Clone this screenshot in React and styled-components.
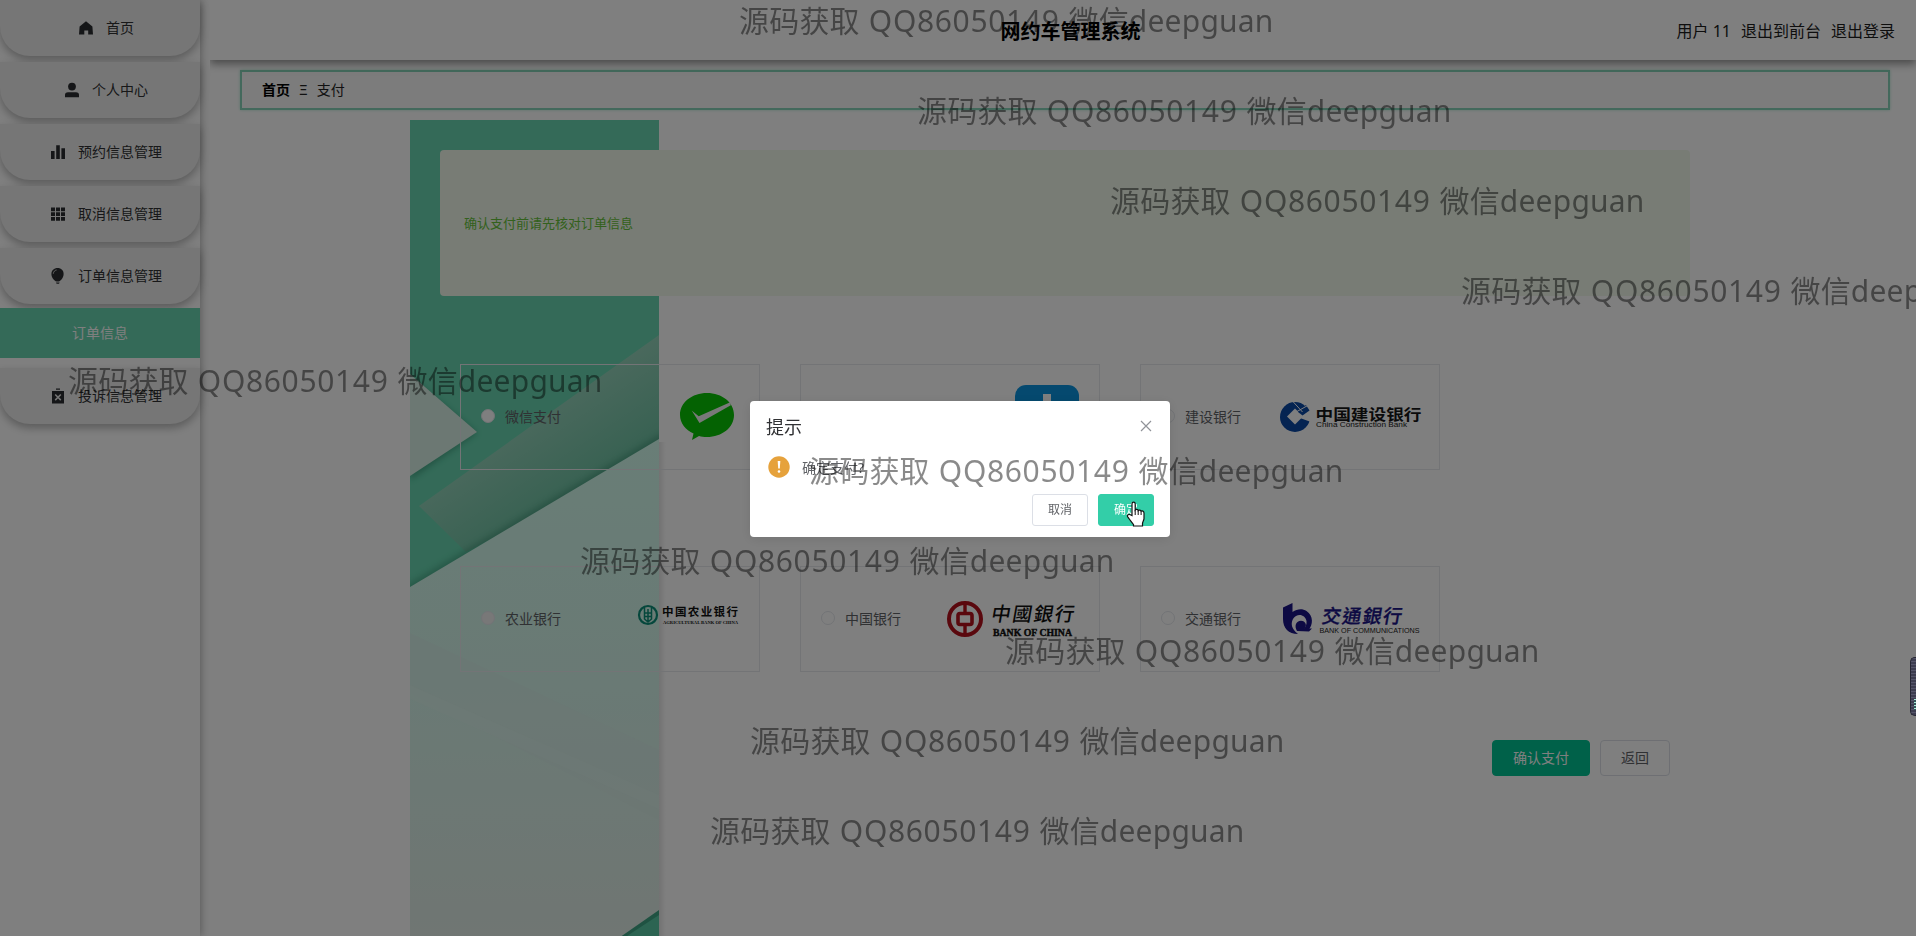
import React from 'react';
import styled, { createGlobalStyle } from 'styled-components';

const GlobalStyle = createGlobalStyle`
  * { box-sizing: border-box; }
  html, body { margin: 0; padding: 0; overflow: hidden; }
  body {
    width: 1916px;
    height: 936px;
    background: #fff;
    font-family: "Noto Sans", "Noto Sans CJK SC", sans-serif;
    font-size: 14px;
    color: #303133;
  }
`;

const Page = styled.div`
  display: flex;
  gap: 10px;
  width: 1916px;
  height: 936px;
  background: #fff;
  overflow: hidden;
`;

/* ---------- sidebar ---------- */

const Sidebar = styled.nav`
  width: 200px;
  height: 936px;
  flex: none;
  display: flex;
  flex-direction: column;
  background: #fff;
  box-shadow: 1px 0 8px rgba(64, 64, 64, 0.4);
`;

const MenuItem = styled.div`
  height: 56px;
  flex: none;
  margin-bottom: ${(p) => (p.$open ? 4 : 6)}px;
  display: flex;
  align-items: center;
  justify-content: center;
  border-radius: 0 0 30px 30px;
  background: #ececec;
  box-shadow: 0 4px 8px rgba(64, 64, 64, 0.38);
  line-height: 20px;
  color: #303133;

  svg {
    width: 14px;
    height: 14px;
    margin: 0 13px;
    flex: none;
    fill: #2b2d30;
    overflow: visible;
  }
`;

const SubMenuItem = styled.div`
  height: 50px;
  flex: none;
  margin-bottom: 10px;
  padding-bottom: 2px;
  display: flex;
  align-items: center;
  justify-content: center;
  background: #68d5b0;
  color: #fff;
`;

/* ---------- header and breadcrumb ---------- */

const Main = styled.main`
  width: 1706px;
  display: flex;
  flex-direction: column;
`;

const Header = styled.header`
  height: 60px;
  flex: none;
  padding: 4px 21px 0 36px;
  display: grid;
  grid-template-columns: 1fr auto 1fr;
  align-items: center;
  background: #fff;
  box-shadow: 0 4px 8px rgba(48, 48, 48, 0.5);
  clip-path: inset(0 0 -20px 0);
`;

const Title = styled.h1`
  grid-column: 2;
  margin: 0;
  font-size: 20px;
  line-height: 28px;
  font-weight: 700;
  color: #000;
`;

const HeaderLinks = styled.div`
  display: flex;
  justify-content: flex-end;
  gap: 10px;
  padding-bottom: 3px;
  font-size: 16px;
  line-height: 24px;
  color: #1c1c1c;
`;

const Breadcrumb = styled.div`
  height: 40px;
  flex: none;
  margin: 10px 26px 10px 30px;
  padding: 0 20px 2px;
  display: flex;
  align-items: center;
  gap: 9px;
  border: 2px solid #86d3b8;
  background: #f8f8f8;
  box-shadow: 0 0 3px #b4e6d6;
  color: #222;

  b { color: #000; font-weight: 700; }
`;

/* ---------- payment form ---------- */

const Content = styled.section`
  position: relative;
  height: 816px;
  width: 1310px;
  margin-left: 200px;
  padding: 30px;
  isolation: isolate;
`;

const Backdrop = styled.svg`
  position: absolute;
  z-index: -1;
  left: 0;
  top: 0;
  width: 249px;
  height: 816px;
  overflow: visible;
`;

const Notice = styled.div`
  height: 146px;
  padding: 0 24px 1px;
  display: flex;
  align-items: center;
  border-radius: 4px;
  background: #f0f9eb;
  color: #67c23a;
  font-size: 13px;
`;

const Options = styled.div`
  padding: 68px 20px 0;
  display: grid;
  grid-template-columns: repeat(3, 300px);
  column-gap: 40px;
  row-gap: 96px;
`;

const Option = styled.label`
  height: 106px;
  padding: 0 9px 0 20px;
  display: flex;
  align-items: center;
  justify-content: space-between;
  border: 1px solid #e6e8ec;
  color: #606266;
`;

const Choice = styled.span`
  display: flex;
  align-items: center;
  gap: 10px;
  padding-bottom: 3px;
`;

const Radio = styled.span`
  width: 14px;
  height: 14px;
  border-radius: 50%;
  border: 1px solid #e4e7ec;
  background: ${(p) => (p.$dim ? '#f0f0f0' : '#fff')};
`;

const Logo = styled.svg`
  width: 160px;
  height: 60px;
  overflow: visible;
`;

const Actions = styled.div`
  margin-top: 68px;
  padding-right: 20px;
  display: flex;
  justify-content: flex-end;
  gap: 10px;
`;

const Button = styled.button`
  height: ${(p) => (p.$small ? 32 : 36)}px;
  width: ${(p) => p.$width}px;
  padding: 0;
  border-radius: ${(p) => (p.$small ? 3 : 4)}px;
  border: 1px solid ${(p) => p.$fill || '#dcdfe6'};
  background: ${(p) => p.$fill || '#fff'};
  color: ${(p) => (p.$fill ? '#fff' : '#606266')};
  font: ${(p) => (p.$small ? '12px' : '14px')} "Noto Sans", "Noto Sans CJK SC", sans-serif;
  line-height: 1;
`;

const GhostButton = styled(Button)`
  background: transparent;
`;

/* ---------- dialog ---------- */

const Overlay = styled.div`
  position: fixed;
  inset: 0;
  padding: 2px 0 0 4px;
  display: flex;
  align-items: center;
  justify-content: center;
  background: rgba(0, 0, 0, 0.5);
`;

const Dialog = styled.div`
  width: 420px;
  height: 136px;
  padding: 11px 16px;
  display: flex;
  flex-direction: column;
  border-radius: 4px;
  background: #fff;
  box-shadow: 0 2px 12px rgba(0, 0, 0, 0.1);
`;

const DialogHead = styled.div`
  height: 28px;
  display: flex;
  align-items: center;
  justify-content: space-between;
  font-size: 18px;
  color: #303133;

  svg { width: 16px; height: 16px; }
`;

const DialogBody = styled.div`
  height: 24px;
  margin: 15px 0;
  padding-left: 2px;
  display: flex;
  align-items: center;
  gap: 12px;
  color: #606266;

  svg { width: 22px; height: 22px; }
`;

const DialogFoot = styled.div`
  display: flex;
  justify-content: flex-end;
  gap: 10px;
`;

/* ---------- floating layers ---------- */

const Watermark = styled.div`
  position: absolute;
  left: ${(p) => p.$x}px;
  top: ${(p) => p.$y}px;
  display: flex;
  gap: 9px;
  height: 40px;
  line-height: 40px;
  white-space: nowrap;
  font-size: 30px;
  letter-spacing: 0.2px;
  color: rgba(0, 0, 0, 0.46);
`;

const WatermarkLayer = styled.div`
  position: fixed;
  inset: 0;
  overflow: hidden;
  pointer-events: none;
`;

const WatermarkNumber = styled.span`
  letter-spacing: 0.65px;
`;

const Cursor = styled.svg`
  position: fixed;
  left: 1126px;
  top: 501px;
  width: 20px;
  height: 26px;
`;

const EdgeWidget = styled.div`
  position: fixed;
  right: 0;
  top: 657px;
  width: 6px;
  height: 59px;
  padding: 41px 0 0 3px;
  border: 1px solid #252533;
  border-right: 0;
  border-radius: 5px 0 0 5px;
  background: repeating-linear-gradient(#55556a 0 1px, #3d3d50 1px 3px);

  &::after {
    content: "";
    display: block;
    height: 11px;
    background: repeating-linear-gradient(#a5ead6 0 1px, #35555a 1px 3px);
  }
`;

/* ---------- icons ---------- */

const icons = {
  home: (
    <svg viewBox="0 0 14 14"><path d="M7 .3 13.4 5.6 14 13.6H9.2V9.4H5.3v4.2H0L.6 5.6z" /></svg>
  ),
  user: (
    <svg viewBox="0 0 14 14"><circle cx="7" cy="3.6" r="3.9" /><path d="M0 14.2V11.8Q0 9.2 3 9.2h8q3 0 3 2.6v2.4z" /></svg>
  ),
  data: (
    <svg viewBox="0 0 14 14"><path d="M0 6h3.6v8H0zM5.2 0.2h3.6V14H5.2zM10.4 3.2H14V14h-3.6z" /></svg>
  ),
  grid: (
    <svg viewBox="0 0 14 14">
      <path d="M0 .5h4v3.7H0zM5 .5h4v3.7H5zM10 .5h4v3.7h-4zM0 5.2h4v3.7H0zM5 5.2h4v3.7H5zM10 5.2h4v3.7h-4zM0 10h4v3.7H0zM5 10h4v3.7H5zM10 10h4v3.7h-4z" />
    </svg>
  ),
  balloon: (
    <svg viewBox="0 0 14 14">
      <path d="M6.6-1C10.200-1 12.600 1.400 12.600 5c0 3.500-2.600 6.800-5 7.600h-2C3 11.800.4 8.500.4 5c0-3.600 2.600-6 6.200-6z" />
      <path d="M5 13.400h3.600l-.6 1.400H5.600z" />
      <path d="M2.300 4.700C2.500 2.700 3.800 1.300 5.600 1" fill="none" stroke="#c8c8c8" strokeWidth="1" />
    </svg>
  ),
  clipboard: (
    <svg viewBox="0 0 14 14">
      <path d="M5 -.6h4v1.400H5zM1 2h12v12.400H1z" />
      <path d="M4.200 5.500l5.600 5.600M9.800 5.500l-5.600 5.600" stroke="#ececec" strokeWidth="1.500" />
    </svg>
  ),
};

const WechatLogo = () => (
  <Logo viewBox="0 0 160 60">
    <path d="M117 6c15 0 27 9.500 27 22s-12 22-27 22c-3.500 0-5.500-.3-8-1l-7 4 1.500-6.500C95.500 43 90 36 90 28 90 15.500 102 6 117 6z" fill="#08c405" />
    <path d="M101.700 23.500l7 5.800 31.500-14 .6 3-31.300 17.800z" fill="#f2f2f2" />
  </Logo>
);

const AlipayLogo = () => (
  <Logo viewBox="0 0 160 60">
    <rect x="85" y="-2" width="64" height="64" rx="11" fill="#0a93de" />
    <path d="M113 7h8v9h18v5h-18v6h14c-2 8-5 13-9 17 6 3 13 4 20 6l-2 7c-9-2-17-5-24-8-15 13-30 5-27-5 3-9 16-9 25-3 3-3 5-6 6-9H98v-5h15v-6H96v-5h17z" fill="#fff" />
  </Logo>
);

const CcbLogo = () => (
  <Logo viewBox="0 0 160 60">
    <circle cx="25" cy="30" r="15" fill="#0a48a4" />
    <path d="M25 21.500 33 29.500 25 37.500 17 29.500z" fill="#fff" />
    <path d="M29 26.500 41 22V35L30 31z" fill="#fff" />
    <path d="M27.500 24.500 36 18l3.500 5.500-7 5z" fill="#0a48a4" />
    <path d="M22 13.500 32.500 25M27 24.500 39.500 17.500" stroke="#fff" strokeWidth="1" />
    <text x="45.500" y="33" fontSize="15" fontWeight="700" textLength="106" lengthAdjust="spacingAndGlyphs" fill="#161616">中国建设银行</text>
    <text x="46" y="40" fontSize="8" textLength="91" lengthAdjust="spacingAndGlyphs" fontFamily="Liberation Sans" fill="#161616">China Construction Bank</text>
  </Logo>
);

const AbcLogo = () => (
  <Logo viewBox="0 0 160 60">
    <circle cx="58" cy="26" r="9" fill="none" stroke="#0b8f78" strokeWidth="2.200" />
    <path d="M58 20v15M54.500 18v6h7v-6M54 27.500h8M54.500 23v7l3.500 3 3.500-3v-7" fill="none" stroke="#0b8f78" strokeWidth="1.500" />
    <text x="72" y="27" fontSize="11.500" fontWeight="700" textLength="76" fill="#111">中国农业银行</text>
    <text x="73" y="35.300" fontSize="5" fontWeight="700" textLength="75" lengthAdjust="spacingAndGlyphs" fontFamily="Liberation Serif" fill="#111">AGRICULTURAL BANK OF CHINA</text>
  </Logo>
);

const BocLogo = () => (
  <Logo viewBox="0 0 160 60">
    <g fill="none" stroke="#b4101c">
      <circle cx="35" cy="30" r="16" strokeWidth="4" />
      <rect x="28" y="24.500" width="14" height="11" rx="2" strokeWidth="3.600" />
      <path d="M35 13v11M35 36v11" strokeWidth="3.400" />
    </g>
    <g transform="skewX(-10)">
      <text x="66" y="32" fontSize="19.500" fontWeight="500" textLength="83" fontFamily="Noto Sans CJK TC" fill="#111">中國銀行</text>
    </g>
    <text x="63" y="47" fontSize="10" fontWeight="700" textLength="79" lengthAdjust="spacingAndGlyphs" fontFamily="Liberation Serif" fill="#111" stroke="#111" strokeWidth=".4">BANK OF CHINA</text>
  </Logo>
);

const BocomLogo = () => (
  <Logo viewBox="0 0 160 60">
    <path d="M13 18.500 22.500 14v9c5-3.500 10-3.500 14-1 7 4.500 7 14 1.500 19.500H32c3.500-2.500 5-6 4.500-9.500-1-5.500-6.500-7.500-10.500-5-4 2.300-5.500 8-3 12.500 1.200 2.300 3 4 5 5.500-9.500 0-15-6-15-15z" fill="#1a1486" />
    <path d="M27 42c-3-5-1-10 4-10.200 4.500 0 6.500 4.700 3.500 7.700H42l-3 3z" fill="#1a1486" />
    <g transform="skewX(-10)">
      <text x="57" y="34" fontSize="19" fontWeight="500" textLength="80" fontFamily="Noto Sans CJK TC" fill="#1a1486" stroke="#1a1486" strokeWidth=".3">交通銀行</text>
    </g>
    <text x="49.500" y="44" fontSize="7.500" textLength="100" lengthAdjust="spacingAndGlyphs" fontFamily="Liberation Sans" fill="#222">BANK OF COMMUNICATIONS</text>
  </Logo>
);

const PanelArt = () => (
  <Backdrop viewBox="0 0 249 816">
    <defs>
      <linearGradient id="band" gradientUnits="userSpaceOnUse" x1="90" y1="320" x2="140" y2="395">
        <stop offset="0" stopColor="#94d2ba" />
        <stop offset="1" stopColor="#6ec2a3" />
      </linearGradient>
      <linearGradient id="sheet" x1="0" y1="0" x2="0" y2="1">
        <stop offset="0" stopColor="#d2fcee" />
        <stop offset=".5" stopColor="#d4f4ea" />
        <stop offset="1" stopColor="#e0ece6" />
      </linearGradient>
      <linearGradient id="edge" x1="0" y1="0" x2="1" y2="0">
        <stop offset="0" stopColor="#000" stopOpacity=".1" />
        <stop offset="1" stopColor="#000" stopOpacity="0" />
      </linearGradient>
      <filter id="soft" x="-20%" y="-20%" width="140%" height="140%"><feGaussianBlur stdDeviation="3" /></filter>
      <clipPath id="panel"><rect width="249" height="816" /></clipPath>
    </defs>
    <rect x="249" y="322" width="7" height="494" fill="url(#edge)" />
    <g clipPath="url(#panel)">
      <rect width="249" height="816" fill="#68d5b0" />
      <path d="M9 386 249 215V330L56 432z" fill="url(#band)" />
      <path d="M0 256 67 313 0 360z" fill="#1c6e52" opacity=".45" filter="url(#soft)" />
      <path d="M0 254 67 312 0 356z" fill="#d8f0e6" />
      <path d="M-5 466 254 312V820H-5z" fill="#1c6e52" opacity=".35" filter="url(#soft)" />
      <path d="M0 467 249 319V816H0z" fill="url(#sheet)" />
      <path d="M0 513 249 630V700L0 573z" fill="#d8ece6" opacity=".4" />
      <path d="M0 565 249 675v14L0 579z" fill="#dcf4ec" opacity=".5" />
      <path d="M249 790 206 820H249z" fill="#3fa584" />
      <path d="M249 795 214 818H249z" fill="#58c9a4" />
    </g>
  </Backdrop>
);

/* ---------- data ---------- */

const menu = [
  { icon: 'home', text: '首页' },
  { icon: 'user', text: '个人中心' },
  { icon: 'data', text: '预约信息管理' },
  { icon: 'grid', text: '取消信息管理' },
  { icon: 'balloon', text: '订单信息管理', child: '订单信息' },
  { icon: 'clipboard', text: '投诉信息管理' },
];

const payments = [
  { text: '微信支付', Mark: WechatLogo },
  { text: '支付宝支付', Mark: AlipayLogo },
  { text: '建设银行', Mark: CcbLogo },
  { text: '农业银行', Mark: AbcLogo, dim: true },
  { text: '中国银行', Mark: BocLogo },
  { text: '交通银行', Mark: BocomLogo },
];

const marks = [
  [739, 1], [917, 91], [1110, 181], [1461, 271], [68, 361],
  [809, 451], [580, 541], [1005, 631], [750, 721], [710, 811],
];

export default function App() {
  return (
    <>
      <GlobalStyle />
      <Page>
        <Sidebar>
          {menu.map((m) => (
            <React.Fragment key={m.text}>
              <MenuItem $open={!!m.child}>
                {icons[m.icon]}
                {m.text}
              </MenuItem>
              {m.child && <SubMenuItem>{m.child}</SubMenuItem>}
            </React.Fragment>
          ))}
        </Sidebar>
        <Main>
          <Header>
            <Title>网约车管理系统</Title>
            <HeaderLinks>
              <span>用户 11</span>
              <span>退出到前台</span>
              <span>退出登录</span>
            </HeaderLinks>
          </Header>
          <Breadcrumb>
            <b>首页</b>
            <span>Ξ</span>
            <span>支付</span>
          </Breadcrumb>
          <Content>
            <PanelArt />
            <Notice>确认支付前请先核对订单信息</Notice>
            <Options>
              {payments.map(({ text, Mark, dim }) => (
                <Option key={text}>
                  <Choice>
                    <Radio $dim={dim} />
                    {text}
                  </Choice>
                  <Mark />
                </Option>
              ))}
            </Options>
            <Actions>
              <Button $width={98} $fill="#00c292">确认支付</Button>
              <GhostButton $width={70}>返回</GhostButton>
            </Actions>
          </Content>
        </Main>
      </Page>
      <Overlay>
        <Dialog>
          <DialogHead>
            提示
            <svg viewBox="0 0 16 16"><path d="M3 3l10 10M13 3L3 13" stroke="#909399" strokeWidth="1.200" /></svg>
          </DialogHead>
          <DialogBody>
            <svg viewBox="0 0 22 22">
              <circle cx="11" cy="11" r="10.700" fill="#e6a23c" />
              <path d="M9.700 5h2.600l-.5 7.500h-1.600z" fill="#fff" />
              <circle cx="11" cy="15.500" r="1.300" fill="#fff" />
            </svg>
            确定支付?
          </DialogBody>
          <DialogFoot>
            <Button $small $width={56}>取消</Button>
            <Button $small $width={56} $fill="#33cea8">确定</Button>
          </DialogFoot>
        </Dialog>
      </Overlay>
      <EdgeWidget />
      <WatermarkLayer>
        {marks.map(([x, y]) => (
          <Watermark key={y} $x={x} $y={y}>
            <span>源码获取</span>
            <WatermarkNumber>QQ86050149</WatermarkNumber>
            <span>微信deepguan</span>
          </Watermark>
        ))}
      </WatermarkLayer>
      <Cursor viewBox="0 0 20 26">
        <path d="M6 14.500V3c0-2.400 3.200-2.400 3.200 0v6c.8-1 2.700-.8 3 .6.8-.9 2.600-.6 2.900.7 1-.8 2.900-.3 2.900 1.700v5.500c0 2-1.500 3.500-1.500 5V25H7.500v-1.500C5.500 21 3 18 1.700 15.800c-1-2 1.200-3 2.600-2z" fill="#fff" stroke="#111" strokeWidth="1.200" />
        <path d="M9.200 9v5M12.200 10v4M15.100 10.500v3.500" stroke="#111" strokeWidth="1" />
      </Cursor>
    </>
  );
}
